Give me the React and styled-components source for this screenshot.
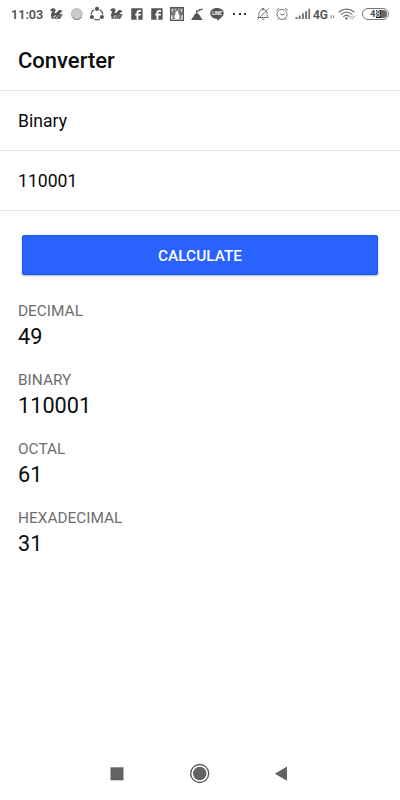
import React from "react";
import styled, { createGlobalStyle } from "styled-components";

const GlobalStyle = createGlobalStyle`
  * { box-sizing: border-box; }
  body { margin: 0; background: #fff; font-family: Roboto, sans-serif; color: #0c0c0c; }
`;

const Screen = styled.div`
  width: 400px;
  height: 800px;
  display: flex;
  flex-direction: column;
  background: #fff;
  overflow: hidden;
`;

const StatusBar = styled.div`
  height: 30px;
  padding: 4px 0 6px 11px;
  display: flex;
  align-items: center;
  color: #505050;
`;

const Clock = styled.span`
  width: 36px;
  padding-top: 1px;
  font-size: 12.6px;
  line-height: 20px;
  font-weight: 600;
  white-space: nowrap;
`;

const Network = styled.span`
  width: 17px;
  padding-top: 1px;
  font-size: 12px;
  line-height: 20px;
  font-weight: 600;
`;

const Glyph = styled.svg`
  flex: none;
  display: block;
  width: ${(p) => p.$w || 20}px;
  height: 20px;
  fill: #555;
`;

const Battery = styled.div`
  width: 27px;
  height: 12px;
  margin-left: 4px;
  border: 1px solid #777;
  border-radius: 6px;
  display: flex;
  justify-content: center;
  background: linear-gradient(90deg, #fff 0 12px, #161616 12px 17px, #666 17px) content-box;
  padding: 1px;
  overflow: hidden;
`;

const Charge = styled.span`
  font-size: 9px;
  line-height: 9px;
  font-weight: 700;
  color: #444;
  b { color: #bbb; }
`;

const Header = styled.header`
  height: 61px;
  padding: 1px 18px 0;
  display: flex;
  align-items: center;
  border-bottom: 1px solid #e7e7e7;
`;

const Title = styled.h1`
  margin: 0;
  font-size: 22px;
  line-height: 28px;
  font-weight: 500;
`;

const Field = styled.div`
  height: 60px;
  padding: 2px 18px 0;
  display: flex;
  align-items: center;
  border-bottom: 1px solid #e7e7e7;
  font-size: 17.6px;
  line-height: 21px;
`;

const CalculateButton = styled.button`
  flex: none;
  height: 40px;
  margin: 24px 22px 0;
  padding: 1px 0 0;
  border: 1px solid #1458fa;
  border-radius: 2px;
  background: #2962ff;
  color: #fff;
  font: 500 15.4px/20px Roboto, sans-serif;
  box-shadow: 0 1px 2px rgba(0, 0, 0, 0.3);
`;

const Results = styled.dl`
  flex: 1;
  margin: 0;
  padding: 25px 18px 0;
`;

const Result = styled.div`
  height: 69px;
`;

const Label = styled.dt`
  font-size: 15.4px;
  line-height: 22px;
  color: #6e6e6e;
`;

const Value = styled.dd`
  margin: 0;
  font-size: 21.7px;
  line-height: 30px;
`;

const NavBar = styled.nav`
  height: 53px;
  display: flex;
  justify-content: space-between;
  padding: 0 108px 0 106px;
`;

const NavIcon = styled.svg`
  width: 22px;
  height: 53px;
  fill: #636363;
`;

const Squirrel = () => (
  <Glyph viewBox="0 0 20 20">
    <path d="M3.500 5.700C4.500 4 7.500 3.600 8.400 5.200 9.100 6.600 7.900 7.900 7.400 9c1.500.2 2.200-.6 3.100-1.600 1.200-1.500 3.100-1.800 4.400-.6l-.2 1.700-1.500-.1-.6 1.300 2.700.6.700 1-1.800.2.300 1.600-1.500 1.600H5.100c-1 0-1.500-1-.5-1.400-1.300-2.200-.4-4.500.9-5.900-.9.200-1.700-.1-1.700-.6-.5-.2-.6-.7-.3-1.100z" />
    <path d="M7 14.200c-.5-1.600.5-2.600 2.200-2.400M9.500 14l.3-1.100M12 11.300l-.3 1.200" fill="none" stroke="#fff" strokeWidth=".9" />
  </Glyph>
);

const Moon = () => (
  <Glyph viewBox="0 0 20 20">
    <circle cx="9.700" cy="10" r="5.500" fill="#c9c9c9" stroke="#aaa" strokeWidth=".7" />
    <path d="M6 13.800a5.400 5.400 0 0 0 8.400-.7" fill="none" stroke="#888" strokeWidth="1.100" />
  </Glyph>
);

const Share = () => (
  <Glyph viewBox="0 0 20 20">
    <path d="M7.200 5.800C5.400 6.800 4.200 8.500 4.200 10.500M12.700 5.800c1.900 1 3 2.700 3 4.700M7 14.900c1.900 1.300 4 1.300 5.900 0" fill="none" stroke="#555" strokeWidth="1.200" />
    <circle cx="10" cy="4.900" r="2.100" />
    <circle cx="4.900" cy="13" r="2.100" />
    <circle cx="14.900" cy="13" r="2.100" />
  </Glyph>
);

const Facebook = () => (
  <Glyph viewBox="0 0 20 20">
    <rect x="4.200" y="4.300" width="11.400" height="11.400" rx=".5" />
    <path d="M11.400 15.700v-4.200h2.300l.3-1.700h-2.600V9c0-.8.300-1.200 1.200-1.200h1.500V6h-2c-1.800 0-2.600 1-2.600 2.500v1.300H8.200v1.700h1.300v4.200z" fill="#fff" />
  </Glyph>
);

const Picture = () => (
  <Glyph viewBox="0 0 20 20">
    <rect x="3.500" y="3.500" width="13" height="13" fill="#777" stroke="#555" strokeWidth="1" />
    <path d="M4.800 5h1.400v2l-.7 1-.7-1zM13.800 5h1.400v2l-.7 1-.7-1zM8 5h1v1H8zM11 5h1v1h-1z" fill="#ddd" />
    <path d="M4.300 10.500 5.500 12v3H4.300zM15.700 10.500 14.500 12v3h1.200zM8.500 8l1.500-1.500L11.500 8v2l1.300 2-.8 3H8l-.8-3 1.300-2z" fill="#fff" />
    <path d="M4.500 15.500h11" stroke="#ddd" strokeWidth=".7" />
  </Glyph>
);

const Mountain = () => (
  <Glyph viewBox="0 0 20 20">
    <path d="m4.100 15.900 4.100-6.400h3.200l4.300 6.400z" />
    <path d="M9.700 9.500V6.900h2.200l.8-1.300h1.500l1.300-.9" fill="none" stroke="#555" strokeWidth="1.300" />
  </Glyph>
);

const Bubble = () => (
  <Glyph viewBox="0 0 20 20">
    <path d="M10 4c3.900 0 6.700 2.200 6.700 5.200 0 3.100-3.500 5.200-6 7.200-.5.400-.8.200-.7-.4l.1-1.200C6.200 14.800 3.300 12.400 3.300 9.200 3.300 6.200 6.200 4 10 4z" />
    <text x="10" y="11" textAnchor="middle" fontFamily="Roboto" fontSize="4.500" fontWeight="700" fill="#fff">LINE</text>
  </Glyph>
);

const More = () => (
  <Glyph $w={26} viewBox="0 0 26 20">
    <path d="M6 9h2v2H6zM12 9h2v2h-2zM17 9h2v2h-2z" fill="#333" />
  </Glyph>
);

const Muted = () => (
  <Glyph viewBox="0 0 20 20">
    <g fill="none" stroke="#777" strokeWidth="1">
      <path d="M4.600 13.500c1.400-1 1.200-2.500 1.400-4.200C6.300 6.800 7.600 5.600 10 5.600s3.700 1.200 4 3.700c.2 1.700 0 3.200 1.400 4.200zM9 5.500v-1h2v1M8.700 14.500c.3 1.300 2.300 1.300 2.600 0M4.500 15.500 15.700 4.500" />
    </g>
  </Glyph>
);

const Alarm = () => (
  <Glyph viewBox="0 0 20 20">
    <g fill="none" stroke="#777" strokeWidth="1">
      <circle cx="9" cy="10.400" r="5" />
      <path d="M3.200 6.500 6 4.300M12 4.300l2.800 2.200M5.700 14.500l-1 1.400M12.300 14.500l1 1.400M6.800 9.500 9 11.200l2.700-1.500" />
    </g>
  </Glyph>
);

const Signal = () => (
  <Glyph $w={20} viewBox="0 0 20 20">
    <path fill="#777" d="M2.500 13h2v2h-2zM5.700 11.500h2V15h-2zM8.900 9.300h2V15h-2zM12.100 7.200h2V15h-2zM15.300 4.700h1.800V15h-1.800z" />
  </Glyph>
);

const Traffic = () => (
  <Glyph $w={8} viewBox="0 0 8 20">
    <path d="M1.200 14.500V11.500m-1 1 1-1M3.500 11v3m1-1-1 1" fill="none" stroke="#888" strokeWidth=".9" />
  </Glyph>
);

const Wifi = () => (
  <Glyph viewBox="0 0 20 20">
    <g fill="none" stroke="#777" strokeWidth="1.300">
      <path d="M.7 8.200c4.700-4 11-4 15.800 0M2.900 10.600c3.500-3 7.900-3 11.300 0M5.300 12.800c2-1.800 4.600-1.800 6.500 0" />
    </g>
    <circle cx="8.500" cy="14.400" r="1.200" fill="#666" />
    <path d="m11.800 15 2.800-3.400M14.100 15.300l2.900-3.700" fill="none" stroke="#999" strokeWidth="1" />
  </Glyph>
);

const results = [
  ["DECIMAL", "49"],
  ["BINARY", "110001"],
  ["OCTAL", "61"],
  ["HEXADECIMAL", "31"],
];

export default function App() {
  return (
    <Screen>
      <GlobalStyle />
      <StatusBar>
        <Clock>11:03</Clock>
        <Squirrel />
        <Moon />
        <Share />
        <Squirrel />
        <Facebook />
        <Facebook />
        <Picture />
        <Mountain />
        <Bubble />
        <More />
        <Muted />
        <Alarm />
        <Signal />
        <Network>4G</Network>
        <Traffic />
        <Wifi />
        <Battery><Charge>4<b>8</b></Charge></Battery>
      </StatusBar>
      <Header><Title>Converter</Title></Header>
      <Field>Binary</Field>
      <Field>110001</Field>
      <CalculateButton type="button">CALCULATE</CalculateButton>
      <Results>
        {results.map(([label, value]) => (
          <Result key={label}>
            <Label>{label}</Label>
            <Value>{value}</Value>
          </Result>
        ))}
      </Results>
      <NavBar>
        <NavIcon viewBox="0 0 22 53"><rect x="4.500" y="20.300" width="13" height="13" /></NavIcon>
        <NavIcon viewBox="0 0 22 53">
          <circle cx="11.700" cy="26.500" r="9" fill="none" stroke="#555" strokeWidth="1.300" />
          <circle cx="11.700" cy="26.500" r="6.700" />
        </NavIcon>
        <NavIcon viewBox="0 0 22 53"><path d="M4.800 26.700 17 19.500v14.300z" /></NavIcon>
      </NavBar>
    </Screen>
  );
}
